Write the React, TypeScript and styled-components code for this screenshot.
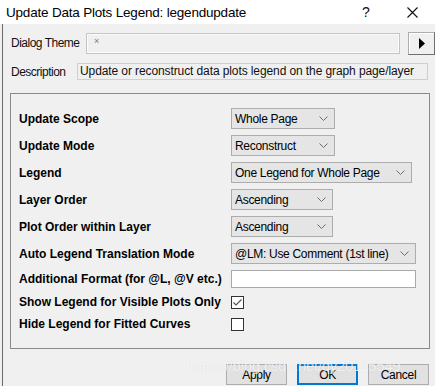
import styled, { createGlobalStyle } from 'styled-components';

const GlobalStyle = createGlobalStyle`
  html, body {
    margin: 0;
    padding: 0;
    background: #f0f0f0;
  }
  body {
    font-family: "Liberation Sans", Arial, sans-serif;
    color: #000;
  }
`;

const S = {
  Window: styled.div`
    position: relative;
    width: 435px;
    height: 386px;
    overflow: hidden;
    background: #f0f0f0;
  `,

  TitleBar: styled.div`
    display: flex;
    align-items: center;
    height: 24px;
    background: #fff;
    padding-left: 6px;
  `,
  Title: styled.div`
    flex: 1;
    font-size: 13.5px;
    letter-spacing: -0.2px;
    color: #000;
  `,
  TitleButton: styled.div`
    display: flex;
    align-items: center;
    justify-content: center;
    width: 46px;
    height: 24px;
    font-size: 14px;
    color: #111;
  `,

  Body: styled.div`
    height: 362px;
    margin-left: 2px;
    border-left: 1px solid #6a6a6a;
    box-sizing: border-box;
    padding-top: 8px;
  `,

  ThemeRow: styled.div`
    display: flex;
    align-items: center;
    height: 22px;
  `,
  HeadLabel: styled.div<{ $width: number }>`
    width: ${({ $width }) => $width}px;
    padding-left: 8px;
    box-sizing: border-box;
    font-size: 12px;
    letter-spacing: -0.5px;
    color: #111;
  `,
  ThemeBox: styled.div`
    width: 314px;
    height: 21px;
    box-sizing: border-box;
    border: 1px solid #c4c4c4;
    box-shadow: inset 0 0 0 1px #fbfbfb;
    background: #f0f0f0;
    font-size: 9px;
    color: #777;
    padding: 2px 0 0 7px;
  `,
  ArrowButton: styled.div`
    margin-left: 8px;
    width: 27px;
    height: 23px;
    box-sizing: border-box;
    border: 1px solid #adadad;
    border-right-color: #707070;
    border-bottom-color: #707070;
    box-shadow: inset 1px 1px 0 #fff;
    background: #f0f0f0;
    display: flex;
    align-items: center;
    justify-content: center;
  `,

  DescRow: styled.div`
    display: flex;
    align-items: center;
    height: 17px;
    margin-top: 9px;
  `,
  DescBox: styled.div`
    width: 351px;
    height: 17px;
    box-sizing: border-box;
    border: 1px solid #cfcfcf;
    font-size: 12px;
    letter-spacing: -0.1px;
    line-height: 15px;
    padding-left: 2px;
    color: #111;
    white-space: nowrap;
    overflow: hidden;
  `,

  Group: styled.div`
    margin: 13px 0 0 7px;
    width: 420px;
    height: 256px;
    box-sizing: border-box;
    border: 1px solid #8a8a8a;
    padding: 11px 0 0 8px;
    display: flex;
    flex-direction: column;
  `,
  Row: styled.div<{ $height: number }>`
    display: flex;
    align-items: center;
    height: ${({ $height }) => $height}px;
  `,
  Label: styled.div`
    width: 212px;
    font-size: 12px;
    font-weight: bold;
    color: #000;
    white-space: nowrap;
  `,

  Select: styled.div<{ $width: number }>`
    display: flex;
    align-items: center;
    justify-content: space-between;
    width: ${({ $width }) => $width}px;
    height: 21px;
    box-sizing: border-box;
    border: 1px solid #adadad;
    background: #e5e5e5;
    padding: 0 6px 0 3px;
    font-size: 12px;
    letter-spacing: -0.3px;
    color: #000;
  `,
  TextInput: styled.div`
    width: 185px;
    height: 18px;
    box-sizing: border-box;
    border: 1px solid #a9a9a9;
    background: #fff;
  `,
  Check: styled.div`
    width: 13px;
    height: 13px;
    box-sizing: border-box;
    border: 1px solid #333;
    background: #fff;
    display: flex;
    align-items: center;
    justify-content: center;
  `,

  ButtonBar: styled.div`
    display: flex;
    justify-content: flex-end;
    gap: 10px;
    margin-top: 15px;
    padding-right: 6px;
  `,
  Button: styled.div<{ $default?: boolean }>`
    width: 61px;
    height: 21px;
    box-sizing: border-box;
    border: ${({ $default }) => ($default ? '2px solid #0078d7' : '1px solid #adadad')};
    background: #e1e1e1;
    display: flex;
    align-items: center;
    justify-content: center;
    font-size: 12px;
    letter-spacing: -0.3px;
    color: #000;
  `,

  Watermark: styled.div`
    position: absolute;
    left: 190px;
    top: 357px;
    font-size: 15px;
    letter-spacing: -0.3px;
    color: rgba(255, 255, 255, 0.75);
    text-shadow: 0 0 1px rgba(0, 0, 0, 0.12);
    white-space: nowrap;
    pointer-events: none;
  `,
};

const Chevron = () => (
  <svg width="9" height="5" viewBox="0 0 9 5">
    <polyline points="0.5,0.5 4.5,4.5 8.5,0.5" fill="none" stroke="#6d6d6d" strokeWidth="1" />
  </svg>
);

const CloseIcon = () => (
  <svg width="11" height="11" viewBox="0 0 11 11">
    <path d="M0.5 0.5 L10.5 10.5 M10.5 0.5 L0.5 10.5" stroke="#111" strokeWidth="1.1" />
  </svg>
);

const Triangle = () => (
  <svg width="6" height="11" viewBox="0 0 6 11">
    <polygon points="0,0 6,5.5 0,11" fill="#000" />
  </svg>
);

const CheckMark = () => (
  <svg width="11" height="11" viewBox="0 0 11 11">
    <polyline points="1.5,5.5 4,8 9.5,2.5" fill="none" stroke="#555" strokeWidth="1.2" />
  </svg>
);

const selectRows = [
  { label: 'Update Scope', value: 'Whole Page', width: 104 },
  { label: 'Update Mode', value: 'Reconstruct', width: 104 },
  { label: 'Legend', value: 'One Legend for Whole Page', width: 181 },
  { label: 'Layer Order', value: 'Ascending', width: 102 },
  { label: 'Plot Order within Layer', value: 'Ascending', width: 102 },
  { label: 'Auto Legend Translation Mode', value: '@LM: Use Comment (1st line)', width: 185 },
];

export default function App() {
  return (
    <S.Window>
      <GlobalStyle />
      <S.TitleBar>
        <S.Title>Update Data Plots Legend: legendupdate</S.Title>
        <S.TitleButton>?</S.TitleButton>
        <S.TitleButton>
          <CloseIcon />
        </S.TitleButton>
      </S.TitleBar>
      <S.Body>
        <S.ThemeRow>
          <S.HeadLabel $width={83}>Dialog Theme</S.HeadLabel>
          <S.ThemeBox>×</S.ThemeBox>
          <S.ArrowButton>
            <Triangle />
          </S.ArrowButton>
        </S.ThemeRow>
        <S.DescRow>
          <S.HeadLabel $width={74}>Description</S.HeadLabel>
          <S.DescBox>Update or reconstruct data plots legend on the graph page/layer</S.DescBox>
        </S.DescRow>

        <S.Group>
          {selectRows.map((row) => (
            <S.Row $height={27} key={row.label}>
              <S.Label>{row.label}</S.Label>
              <S.Select $width={row.width}>
                <span>{row.value}</span>
                <Chevron />
              </S.Select>
            </S.Row>
          ))}
          <S.Row $height={24}>
            <S.Label>Additional Format (for @L, @V etc.)</S.Label>
            <S.TextInput />
          </S.Row>
          <S.Row $height={22}>
            <S.Label>Show Legend for Visible Plots Only</S.Label>
            <S.Check>
              <CheckMark />
            </S.Check>
          </S.Row>
          <S.Row $height={22}>
            <S.Label>Hide Legend for Fitted Curves</S.Label>
            <S.Check />
          </S.Row>
        </S.Group>

        <S.ButtonBar>
          <S.Button>Apply</S.Button>
          <S.Button $default>OK</S.Button>
          <S.Button>Cancel</S.Button>
        </S.ButtonBar>
      </S.Body>
      <S.Watermark>https://blog.csdn.net/qy20115549</S.Watermark>
    </S.Window>
  );
}
